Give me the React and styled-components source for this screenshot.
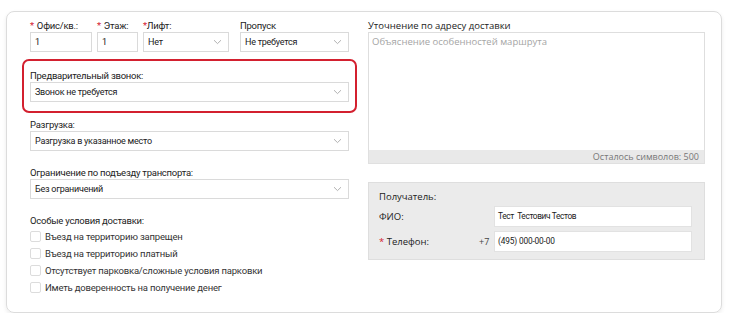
import React from "react";
import styled, { createGlobalStyle } from "styled-components";

const GlobalStyle = createGlobalStyle`
  body {
    margin: 0;
    background: #fff;
    font-family: Roboto, "Noto Sans", sans-serif;
    color: #333;
  }
  * { box-sizing: border-box; }
`;

const Card = styled.section`
  margin: 11px 0 0 6px;
  width: 716px;
  height: 302px;
  border: 1px solid #dcdcdc;
  border-radius: 8px;
  box-shadow: 0 2px 4px rgba(0, 0, 0, 0.08);
  padding: 7px 16px 0 15px;
  display: grid;
  grid-template-columns: 335px 337px;
  column-gap: 11px;
  align-items: start;
`;

const LeftCol = styled.div`
  display: flex;
  flex-direction: column;
`;

const Block = styled.div`
  padding: 0 8px;
  margin-top: ${p => p.$mt || 0}px;
`;

const Highlight = styled.div`
  margin-top: 7px;
  border: 2px solid #d3202f;
  border-radius: 7px;
  padding: 8px 6px 9px;
`;

const TopRow = styled.div`
  display: flex;
  padding: 0 8px;
`;

const Field = styled.div`
  width: ${p => p.$w}px;
  margin-right: ${p => p.$mr || 0}px;
`;

const Label = styled.div`
  font-size: 9.5px;
  letter-spacing: -0.25px;
  line-height: 13px;
  height: 13px;
  white-space: nowrap;
  color: #222;
`;

const Star = styled.span`
  color: #d3202f;
  margin-right: ${p => (p.$tight ? 0 : 3)}px;
`;

const Input = styled.div`
  height: 20px;
  border: 1px solid #dadada;
  background: #fff;
  font-size: 9px;
  letter-spacing: -0.25px;
  line-height: 18px;
  padding: 0 4px;
  color: #1a1a1a;
`;

const Select = styled(Input)`
  display: flex;
  align-items: center;
  justify-content: space-between;
  padding: 0 6px 0 4px;
  white-space: nowrap;
`;

const Chevron = () => (
  <svg width="9" height="6" viewBox="0 0 9 6">
    <path d="M1 1.2 L4.5 4.6 L8 1.2" fill="none" stroke="#a8a8a8" strokeWidth="0.9" />
  </svg>
);

const Dropdown = ({ value }) => (
  <Select>
    <span>{value}</span>
    <Chevron />
  </Select>
);

const CheckList = styled.div`
  display: flex;
  flex-direction: column;
  margin-top: 1px;
`;

const CheckRow = styled.label`
  display: flex;
  align-items: center;
  height: 17px;
  font-size: 9.5px;
  letter-spacing: -0.2px;
  color: #333;
`;

const Box = styled.span`
  width: 11px;
  height: 11px;
  border: 1px solid #dcdcdc;
  border-radius: 2px;
  background: #fff;
  margin-right: 4px;
`;

const RightCol = styled.div`
  display: flex;
  flex-direction: column;
  font-family: "Open Sans", "Noto Sans", sans-serif;
`;

const RightLabel = styled.div`
  font-size: 9.5px;
  line-height: 13px;
  height: 13px;
  color: #222;
`;

const TextArea = styled.div`
  height: 118px;
  border: 1px solid #dedede;
  border-bottom: none;
  background: #fff;
  font-size: 9.5px;
  color: #a5a5a5;
  padding: 2px 3px;
`;

const Counter = styled.div`
  height: 14px;
  background: #e9e9e9;
  border: 1px solid #e0e0e0;
  border-top: none;
  font-size: 9px;
  line-height: 14px;
  text-align: right;
  color: #777;
  padding-right: 5px;
`;

const Recipient = styled.div`
  margin-top: 18px;
  height: 78px;
  background: #ebebeb;
  border: 1px solid #dedede;
  padding: 8px 12px 0 10px;
  display: flex;
  flex-direction: column;
`;

const RecTitle = styled.div`
  font-size: 9.5px;
  line-height: 12px;
  color: #222;
  margin-bottom: 3px;
`;

const RecRow = styled.div`
  display: grid;
  grid-template-columns: 100px 15px 1fr;
  align-items: center;
  height: 21px;
  margin-bottom: 4px;
  font-size: 9.5px;
  color: #222;
`;

const Prefix = styled.span`
  font-size: 9px;
  color: #444;
`;

const RecInput = styled.div`
  height: 21px;
  background: #fff;
  border: 1px solid #e2e2e2;
  font-family: Roboto, sans-serif;
  font-size: 8.3px;
  letter-spacing: ${p => (p.$loose ? -0.15 : -0.35)}px;
  line-height: 19px;
  padding: 0 3px;
  color: #1a1a1a;
`;

export default function App() {
  return (
    <>
      <GlobalStyle />
      <Card>
        <LeftCol>
          <TopRow>
            <Field $w={62} $mr={5}>
              <Label><Star>*</Star>Офис/кв.:</Label>
              <Input>1</Input>
            </Field>
            <Field $w={41} $mr={5}>
              <Label><Star>*</Star>Этаж:</Label>
              <Input>1</Input>
            </Field>
            <Field $w={86} $mr={11}>
              <Label><Star $tight>*</Star>Лифт:</Label>
              <Dropdown value="Нет" />
            </Field>
            <Field $w={109}>
              <Label>Пропуск</Label>
              <Dropdown value="Не требуется" />
            </Field>
          </TopRow>

          <Highlight>
            <Label>Предварительный звонок:</Label>
            <Dropdown value="Звонок не требуется" />
          </Highlight>

          <Block $mt={5}>
            <Label>Разгрузка:</Label>
            <Dropdown value="Разгрузка в указанное место" />
          </Block>

          <Block $mt={15}>
            <Label>Ограничение по подъезду транспорта:</Label>
            <Dropdown value="Без ограничений" />
          </Block>

          <Block $mt={15}>
            <Label>Особые условия доставки:</Label>
            <CheckList>
              {[
                "Въезд на территорию запрещен",
                "Въезд на территорию платный",
                "Отсутствует парковка/сложные условия парковки",
                "Иметь доверенность на получение денег",
              ].map(t => (
                <CheckRow key={t}>
                  <Box />
                  {t}
                </CheckRow>
              ))}
            </CheckList>
          </Block>
        </LeftCol>

        <RightCol>
          <RightLabel>Уточнение по адресу доставки</RightLabel>
          <TextArea>Объяснение особенностей маршрута</TextArea>
          <Counter>Осталось символов: 500</Counter>

          <Recipient>
            <RecTitle>Получатель:</RecTitle>
            <RecRow>
              <span>ФИО:</span>
              <span />
              <RecInput>Тест&nbsp; Тестович Тестов</RecInput>
            </RecRow>
            <RecRow>
              <span><Star $tight>*</Star> Телефон:</span>
              <Prefix>+7</Prefix>
              <RecInput $loose>(495) 000-00-00</RecInput>
            </RecRow>
          </Recipient>
        </RightCol>
      </Card>
    </>
  );
}
